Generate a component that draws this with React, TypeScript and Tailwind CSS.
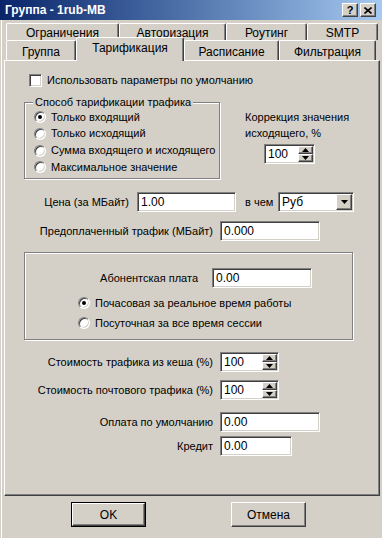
import React from "react";

const sunken =
  "bg-white border border-t-[#808080] border-l-[#808080] border-b-white border-r-white shadow-[inset_1px_1px_0_#404040,inset_-1px_-1px_0_#d4d0c8]";
const raised =
  "bg-[#d4d0c8] border border-t-white border-l-white border-b-[#404040] border-r-[#404040] shadow-[inset_-1px_-1px_0_#808080]";
const etched =
  "border border-[#808080] shadow-[inset_1px_1px_0_#ffffff,1px_1px_0_#ffffff]";

function Radio({ checked }: { checked?: boolean }) {
  return (
    <div className="w-[12px] h-[12px] rounded-full bg-white border border-t-[#808080] border-l-[#808080] border-r-white border-b-white shadow-[inset_1px_1px_0_#404040,inset_-1px_-1px_0_#d4d0c8] flex items-center justify-center shrink-0">
      {checked && <div className="w-[4px] h-[4px] rounded-full bg-black" />}
    </div>
  );
}

function Input({ value, w }: { value: string; w: string }) {
  return (
    <div className={`${sunken} ${w} h-[20px] flex items-center pl-[3px] shrink-0`}>
      <span className="leading-none text-[12px]">{value}</span>
    </div>
  );
}

function Arrow({ dir }: { dir: "up" | "down" }) {
  return (
    <svg width="7" height="4" viewBox="0 0 7 4">
      {dir === "up" ? (
        <polygon points="3.5,0 7,4 0,4" fill="#000" />
      ) : (
        <polygon points="0,0 7,0 3.5,4" fill="#000" />
      )}
    </svg>
  );
}

function Spinner({ value, w }: { value: string; w: string }) {
  return (
    <div className={`${sunken} ${w} h-[20px] flex items-stretch shrink-0 p-[1px]`}>
      <div className="flex-1 flex items-center pl-[2px]">
        <span className="leading-none text-[12px]">{value}</span>
      </div>
      <div className="w-[15px] flex flex-col">
        <div className={`${raised} h-[9px] flex items-center justify-center`}>
          <Arrow dir="up" />
        </div>
        <div className={`${raised} h-[9px] flex items-center justify-center`}>
          <Arrow dir="down" />
        </div>
      </div>
    </div>
  );
}

function Tab({
  label,
  w,
  h,
  selected,
}: {
  label: string;
  w: string;
  h: string;
  selected?: boolean;
}) {
  return (
    <div
      className={`${w} ${h} shrink-0 bg-[#d4d0c8] border-t border-l border-t-white border-l-white border-r border-r-[#404040] shadow-[inset_-1px_0_0_#808080] rounded-t-[2px] flex justify-center ${
        selected ? "relative z-10 -mb-[1px] items-start pt-[3px]" : "items-center pt-[2px]"
      }`}
    >
      <span className="leading-[14px] whitespace-nowrap text-[12px]">{label}</span>
    </div>
  );
}

export default function App() {
  return (
    <div className="w-[382px] h-[538px] bg-[#d4d0c8] overflow-hidden flex flex-col text-[11px] text-black font-['Liberation_Sans',Arial,sans-serif]">
      {/* Title bar */}
      <div className="h-[20px] shrink-0 bg-linear-to-r from-[#0a246a] to-[#a6caf0] flex items-center pl-[5px] pr-[6px]">
        <span className="text-white font-bold text-[12px] leading-none">
          Группа - 1rub-MB
        </span>
        <div className="ml-auto flex gap-[2px]">
          <div className={`${raised} w-[16px] h-[14px] flex items-center justify-center`}>
            <span className="font-bold text-[11px] leading-none">?</span>
          </div>
          <div className={`${raised} w-[16px] h-[14px] flex items-center justify-center`}>
            <svg width="8" height="7" viewBox="0 0 8 7">
              <path d="M0.5 0.5 L7.5 6.5 M7.5 0.5 L0.5 6.5" stroke="#000" strokeWidth="1.6" />
            </svg>
          </div>
        </div>
      </div>

      {/* Window body with frame */}
      <div className="flex-1 flex flex-col border-l border-l-white ml-[1px]">
        {/* Tab row 1 */}
        <div className="flex mt-[3px] ml-[4px] h-[17px]">
          <Tab label="Ограничения" w="w-[113px]" h="h-[17px]" />
          <Tab label="Авторизация" w="w-[107px]" h="h-[17px]" />
          <Tab label="Роутинг" w="w-[81px]" h="h-[17px]" />
          <Tab label="SMTP" w="w-[71px]" h="h-[17px]" />
        </div>
        {/* Tab row 2 */}
        <div className="flex items-end ml-[4px] h-[20px]">
          <Tab label="Группа" w="w-[70px]" h="h-[20px]" />
          <Tab label="Тарификация" w="w-[108px]" h="h-[24px]" selected />
          <Tab label="Расписание" w="w-[95px]" h="h-[20px]" />
          <Tab label="Фильтрация" w="w-[97px]" h="h-[20px]" />
        </div>

        {/* Panel */}
        <div className="ml-[2px] w-[376px] h-[436px] shrink-0 border-t border-l border-t-white border-l-white border-r border-b border-r-[#404040] border-b-[#404040] shadow-[inset_-1px_-1px_0_#808080] flex flex-col">
          {/* Checkbox */}
          <div className="flex items-center h-[13px] mt-[13px] ml-[24px]">
            <div className={`${sunken} w-[13px] h-[13px] shrink-0`} />
            <span className="ml-[5px] leading-none whitespace-nowrap">
              Использовать параметры по умолчанию
            </span>
          </div>

          {/* Group + correction */}
          <div className="flex items-start mt-[8px] ml-[19px]">
            <fieldset className={`${etched} w-[196px] h-[84px] shrink-0 min-w-0`}>
              <legend className="ml-[8px] px-[2px] bg-[#d4d0c8] leading-[14px] whitespace-nowrap">
                Способ тарификации трафика
              </legend>
              <div className="flex flex-col pl-[9px]">
                {[
                  ["Только входящий", true],
                  ["Только исходящий", false],
                  ["Сумма входящего и исходящего", false],
                  ["Максимальное значение", false],
                ].map(([l, c]) => (
                  <div key={l as string} className="flex items-center h-[16.67px]">
                    <Radio checked={c as boolean} />
                    <span className="ml-[5px] leading-none whitespace-nowrap">{l as string}</span>
                  </div>
                ))}
              </div>
            </fieldset>
            <div className="flex flex-col items-start text-left w-[130px] ml-[25px] pt-[14px] shrink-0">
              <span className="leading-[16px] whitespace-nowrap">Коррекция значения</span>
              <span className="leading-[16px] whitespace-nowrap">исходящего, %</span>
              <div className="ml-[19px] mt-[3px]">
                <Spinner value="100" w="w-[51px]" />
              </div>
            </div>
          </div>

          {/* Price row */}
          <div className="flex items-center h-[20px] mt-[13px]">
            <span className="w-[124px] text-right leading-none whitespace-nowrap">Цена (за МБайт)</span>
            <div className="ml-[8px]">
              <Input value="1.00" w="w-[99px]" />
            </div>
            <span className="ml-[9px] w-[33px] leading-none whitespace-nowrap">в чем</span>
            <div className={`${sunken} w-[76px] h-[20px] flex items-stretch p-[1px] shrink-0`}>
              <div className="flex-1 flex items-center pl-[2px]">
                <span className="leading-none text-[12px]">Руб</span>
              </div>
              <div className={`${raised} w-[16px] flex items-center justify-center`}>
                <Arrow dir="down" />
              </div>
            </div>
          </div>

          {/* Prepaid */}
          <div className="flex items-center h-[20px] mt-[9px]">
            <span className="w-[208px] text-right leading-none whitespace-nowrap">
              Предоплаченный трафик (МБайт)
            </span>
            <div className="ml-[7px]">
              <Input value="0.000" w="w-[100px]" />
            </div>
          </div>

          {/* Subscription box */}
          <div className={`${etched} ml-[19px] mt-[11px] w-[329px] h-[88px] shrink-0 flex flex-col`}>
            <div className="flex items-center h-[20px] mt-[15px]">
              <span className="w-[173px] text-right leading-none whitespace-nowrap">Абонентская плата</span>
              <div className="ml-[14px]">
                <Input value="0.00" w="w-[100px]" />
              </div>
            </div>
            <div className="flex items-center h-[20px] mt-[5px] ml-[53px]">
              <Radio checked />
              <span className="ml-[5px] leading-none whitespace-nowrap">
                Почасовая за реальное время работы
              </span>
            </div>
            <div className="flex items-center h-[20px] ml-[53px]">
              <Radio />
              <span className="ml-[5px] leading-none whitespace-nowrap">
                Посуточная за все время сессии
              </span>
            </div>
          </div>

          {/* Cost rows */}
          <div className="flex items-center h-[20px] mt-[12px]">
            <span className="w-[208px] text-right leading-none whitespace-nowrap">
              Стоимость трафика из кеша (%)
            </span>
            <div className="ml-[7px]">
              <Spinner value="100" w="w-[59px]" />
            </div>
          </div>
          <div className="flex items-center h-[20px] mt-[8px]">
            <span className="w-[208px] text-right leading-none whitespace-nowrap">
              Стоимость почтового трафика (%)
            </span>
            <div className="ml-[7px]">
              <Spinner value="100" w="w-[59px]" />
            </div>
          </div>
          <div className="flex items-center h-[20px] mt-[12px]">
            <span className="w-[208px] text-right leading-none whitespace-nowrap">Оплата по умолчанию</span>
            <div className="ml-[7px]">
              <Input value="0.00" w="w-[100px]" />
            </div>
          </div>
          <div className="flex items-center h-[20px] mt-[4px]">
            <span className="w-[208px] text-right leading-none whitespace-nowrap">Кредит</span>
            <div className="ml-[7px]">
              <Input value="0.00" w="w-[72px]" />
            </div>
          </div>
        </div>

        {/* Buttons */}
        <div className="flex mt-[6px]">
          <div className="ml-[69px] w-[75px] h-[25px] border border-black shrink-0">
            <div className={`${raised} w-full h-full flex items-center justify-center`}>
              <span className="leading-none text-[12px]">OK</span>
            </div>
          </div>
          <div className={`${raised} ml-[85px] w-[75px] h-[25px] flex items-center justify-center shrink-0`}>
            <span className="leading-none text-[12px]">Отмена</span>
          </div>
        </div>
      </div>
    </div>
  );
}
